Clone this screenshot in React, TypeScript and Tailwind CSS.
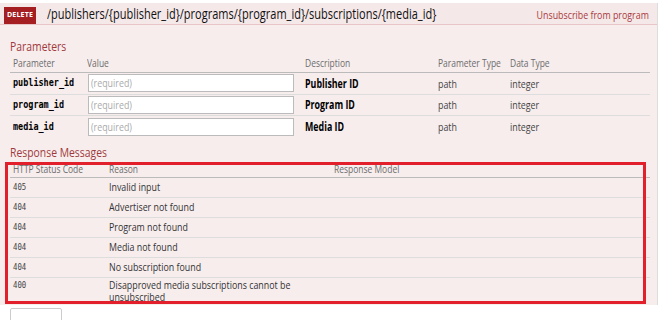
import React from "react";

const params = [
  { name: "publisher_id", desc: "Publisher ID" },
  { name: "program_id", desc: "Program ID" },
  { name: "media_id", desc: "Media ID" },
];

const responses: { code: string; reason: string[] }[] = [
  { code: "405", reason: ["Invalid input"] },
  { code: "404", reason: ["Advertiser not found"] },
  { code: "404", reason: ["Program not found"] },
  { code: "404", reason: ["Media not found"] },
  { code: "404", reason: ["No subscription found"] },
  { code: "400", reason: ["Disapproved media subscriptions cannot be", "unsubscribed"] },
];

const mono = { fontFamily: '"DejaVu Sans Mono", "Liberation Mono", monospace' };

function T({ children, className = "", style }: { children: React.ReactNode; className?: string; style?: React.CSSProperties }) {
  return (
    <span className={`inline-block whitespace-nowrap origin-left scale-x-[0.77] ${className}`} style={style}>
      {children}
    </span>
  );
}

export default function App() {
  return (
    <div
      className="relative w-[663px] h-[320px] overflow-hidden bg-white text-[#333]"
      style={{ fontFamily: '"Open Sans", "Noto Sans", sans-serif' }}
    >
      <div className="w-[658px] mt-[3px] border-r border-[#ddd]">
        {/* heading */}
        <div className="h-[22px] bg-[#f5e8e8] border-b border-[#e8c6c7] flex items-end pl-[4px] pr-[8px]">
          <span className="w-[32px] h-[17px] bg-[#a41e22] text-white text-[7px] font-bold flex items-center justify-center tracking-[0.2px]">
            DELETE
          </span>
          <span className="ml-[11px] mb-[2px] w-[380px] text-[14.3px] leading-[16px] text-[#111]">
            <T>/publishers/{"{publisher_id}"}/programs/{"{program_id}"}/subscriptions/{"{media_id}"}</T>
          </span>
          <span className="ml-auto mb-[3px] text-[11.5px] leading-[13px] text-[#a83a3d]">
            <span className="inline-block whitespace-nowrap origin-right scale-x-[0.77]">Unsubscribe from program</span>
          </span>
        </div>
        {/* content */}
        <div className="h-[280px] bg-[#f7eded] px-[10px] pt-[12px]">
          <h4 className="text-[13.5px] leading-[18px] text-[#a0393c]">
            <T>Parameters</T>
          </h4>
          <div className="w-[640px] text-[11px]">
            <div className="grid grid-cols-[74px_218px_133px_72px_1fr] h-[18px] items-center border-b border-[#bbb] text-[#6c6c6c] pl-[3px]">
              <T>Parameter</T>
              <T>Value</T>
              <T>Description</T>
              <T>Parameter Type</T>
              <T>Data Type</T>
            </div>
            {params.map((p, i) => (
              <div
                key={p.name}
                className={`grid grid-cols-[74px_218px_133px_72px_1fr] h-[21.5px] items-center pl-[3px] ${i < 2 ? "border-b border-[#ddd]" : ""}`}
              >
                <T className="font-bold text-[11px] text-black" style={mono}>
                  {p.name}
                </T>
                <span className="pl-[1px]">
                  <span className="block w-[206px] h-[18px] bg-white border border-[#bbb] text-[11.5px] leading-[16px] pl-[2px] text-[#aaa]">
                    <T>(required)</T>
                  </span>
                </span>
                <T className="font-bold text-[11.5px] text-black">{p.desc}</T>
                <T className="text-[11.5px] text-[#444]">path</T>
                <T className="text-[11.5px] text-[#444]">integer</T>
              </div>
            ))}
          </div>
          <h4 className="mt-[5px] text-[13.5px] leading-[18px] text-[#a0393c]">
            <T>Response Messages</T>
          </h4>
          <div className="w-[640px] text-[11px]">
            <div className="grid grid-cols-[96px_225px_1fr] h-[17px] items-center border-b border-[#bbb] text-[#6c6c6c] pl-[3px]">
              <T>HTTP Status Code</T>
              <T>Reason</T>
              <T>Response Model</T>
            </div>
            {responses.map((r, i) => (
              <div
                key={i}
                className={`grid grid-cols-[96px_225px_1fr] pl-[3px] ${i < 5 ? "h-[20px] items-center border-b border-[#ddd]" : "h-[27px] items-start pt-[1px]"}`}
              >
                <T className={`text-[9.5px] text-[#444] ${i < 5 ? "" : "leading-[12px]"}`} style={mono}>
                  {r.code}
                </T>
                <span className="flex flex-col">
                  {r.reason.map((line) => (
                    <T key={line} className={`text-[11.5px] text-[#333] ${i < 5 ? "leading-[14px]" : "leading-[12px]"}`}>
                      {line}
                    </T>
                  ))}
                </span>
                <span></span>
              </div>
            ))}
          </div>
        </div>
      </div>
      {/* highlight overlay */}
      <div className="absolute left-[5px] top-[162px] w-[641px] h-[142px] border-[3px] border-[#e1202b] pointer-events-none"></div>
      {/* button below */}
      <div className="absolute left-[10px] top-[308px] w-[52px] h-[20px] bg-white border border-[#ccc] rounded-[2px]"></div>
    </div>
  );
}
